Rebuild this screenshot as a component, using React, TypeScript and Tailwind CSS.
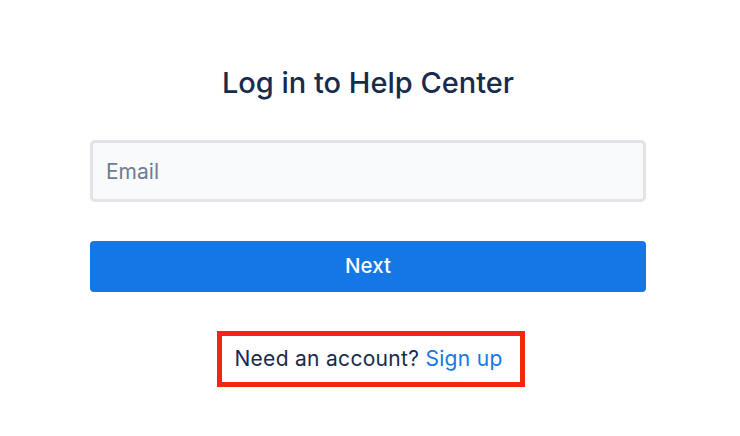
const App = () => {
  return (
    <div className="min-h-[436px] w-full bg-white pr-1 font-['Inter','Liberation_Sans',sans-serif]">
      <div className="mx-auto flex w-[556px] flex-col items-center pt-[65px]">
        <h1 className="text-[29px] leading-[35px] font-medium text-[#172b4d]">
          Log in to Help Center
        </h1>

        <input
          type="email"
          placeholder="Email"
          className="mt-[40px] h-[62px] w-full rounded-[5px] border-[3px] border-[#e1e3e9] bg-[#f9fafb] px-[13px] text-[21px] text-[#172b4d] outline-none placeholder:text-[#6f7c92]"
        />

        <button className="mt-[39px] h-[51px] w-full rounded-[4px] bg-[#1477e5] text-[20.5px] font-medium text-white">
          Next
        </button>

        {/* highlighted sign-up prompt */}
        <div className="mt-[39px] ml-[6px] flex h-[56px] w-[308px] items-center justify-center border-[5px] border-[#f4260f] pr-[5px]">
          <p className="text-[21px] tracking-[0.3px] text-[#172b4d]">
            Need an account?{' '}
            <a href="#" className="text-[#1477e5]">
              Sign up
            </a>
          </p>
        </div>
      </div>
    </div>
  );
};

export default App;
